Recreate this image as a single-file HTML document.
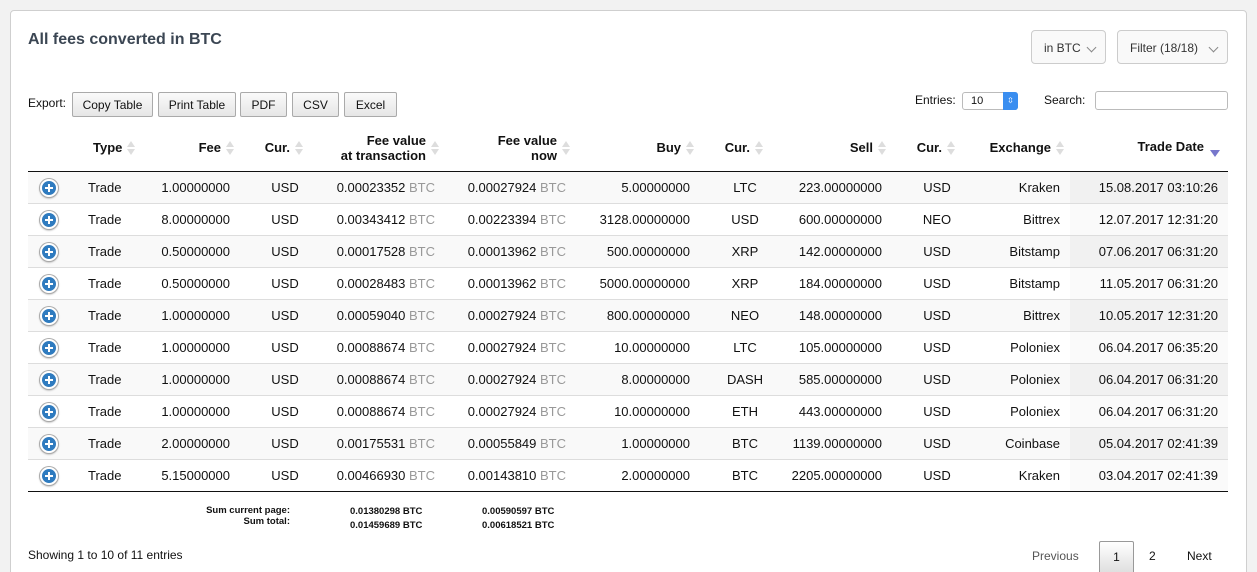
<!DOCTYPE html>
<html style="overflow:hidden;height:572px"><head><meta charset="utf-8"><style>
body{margin:0;background:#f2f2f2;font-family:"Liberation Sans",sans-serif;color:#111;width:1257px;height:572px;overflow:hidden;position:relative}
.card{position:absolute;left:10px;top:10px;width:1235px;height:570px;background:#fff;border:1px solid #cfcfcf;border-radius:4px}
.abs{position:absolute}
h1{position:absolute;left:28px;top:31px;margin:0;font-size:16px;font-weight:bold;color:#3b4653}
.dd{position:absolute;top:30px;height:34px;border:1px solid #ccc;border-radius:4px;background:#f9f9f9;font-size:12px;color:#333;line-height:34px;box-sizing:border-box;padding-left:12px}
.dd i{position:absolute;right:10px;top:13px;width:6px;height:6px;border-right:1.5px solid #888;border-bottom:1.5px solid #888;transform:rotate(45deg)}
.btn{position:absolute;top:92px;height:25px;border:1px solid #aaa;border-radius:2px;background:linear-gradient(#fafafa,#e6e6e6);font-size:12px;text-align:center;line-height:25px;box-sizing:border-box}
table{position:absolute;left:28px;top:125px;border-collapse:collapse;table-layout:fixed;width:1200px;font-size:13px}
th{height:46px;font-weight:bold;text-align:right;padding:0 6px 0 0;border-bottom:1px solid #111;line-height:15px;vertical-align:middle;white-space:nowrap}
td{height:31px;padding:0 10px 0 0;text-align:right;border-top:1px solid #ddd;white-space:nowrap}
tbody tr:first-child td{border-top:none;height:31px}
tbody tr:nth-child(odd) td{background:#f9f9f9}
tbody tr:nth-child(odd) td.s{background:#f1f1f1}
tbody tr:nth-child(even) td.s{background:#fafafa}
tbody tr:last-child td{border-bottom:1px solid #111}
td.c{text-align:center;padding:0}
td.t{text-align:left;padding-left:18px}
td.i{text-align:center;padding:0}
.g{color:#999}
.ar{display:inline-block;width:8px;margin-left:5px;vertical-align:middle;position:relative;height:16px}
.ar:before{content:"";position:absolute;left:0;top:1px;border:4px solid transparent;border-bottom:6px solid #ddd;border-top:0}
.ar:after{content:"";position:absolute;left:0;top:9px;border:4px solid transparent;border-top:6px solid #ddd;border-bottom:0}
.dn{display:inline-block;margin-left:6px;vertical-align:-6px;border:5px solid transparent;border-top:7px solid #7777cc;border-bottom:0}
.ic{display:inline-block;width:14px;height:14px;border-radius:50%;background:#2f7bbf;border:2px solid #fff;box-shadow:0 0 0 1px #aaa,0 1px 2px #888;position:relative;vertical-align:middle}
.ic:before{content:"";position:absolute;left:3px;top:6px;width:8px;height:2px;background:#fff}
.ic:after{content:"";position:absolute;left:6px;top:3px;width:2px;height:8px;background:#fff}
.sum{position:absolute;font-size:9.5px;font-weight:bold}
</style></head><body>
<div class="card"></div>
<h1>All fees converted in BTC</h1>
<div class="dd" style="left:1031px;width:75px">in BTC<i></i></div>
<div class="dd" style="left:1117px;width:111px">Filter (18/18)<i></i></div>
<div class="abs" style="left:28px;top:96px;font-size:12px">Export:</div>
<div class="btn" style="left:72px;width:81px">Copy Table</div>
<div class="btn" style="left:158px;width:78px">Print Table</div>
<div class="btn" style="left:240px;width:47px">PDF</div>
<div class="btn" style="left:292px;width:47px">CSV</div>
<div class="btn" style="left:344px;width:53px">Excel</div>
<div class="abs" style="left:915px;top:93px;font-size:12px">Entries:</div>
<div class="abs" style="left:962px;top:92px;width:56px;height:18px;border:1px solid #bbb;border-radius:3px;box-sizing:border-box;font-size:11px;line-height:16px;padding-left:8px">10<div class="abs" style="right:-1px;top:-1px;width:15px;height:18px;background:#3a8ef0;border-radius:0 3px 3px 0;color:#fff;font-size:8px;text-align:center;line-height:18px">&#8691;</div></div>
<div class="abs" style="left:1044px;top:93px;font-size:12px">Search:</div>
<div class="abs" style="left:1095px;top:91px;width:133px;height:19px;border:1px solid #bbb;border-radius:3px;box-sizing:border-box"></div>
<table>
<colgroup><col style="width:42px"><col style="width:70px"><col style="width:100px"><col style="width:90px"><col style="width:115px"><col style="width:131px"><col style="width:124px"><col style="width:90px"><col style="width:102px"><col style="width:90px"><col style="width:88px"><col style="width:158px"></colgroup>
<thead><tr><th></th><th style="text-align:left;padding-left:23px;padding-right:0">Type<span class="ar"></span></th><th>Fee<span class="ar"></span></th><th style="padding-right:27px">Cur.<span class="ar"></span></th><th><span style="display:inline-block;vertical-align:middle">Fee value<br>at transaction</span><span class="ar"></span></th><th><span style="display:inline-block;vertical-align:middle">Fee value<br>now</span><span class="ar"></span></th><th>Buy<span class="ar"></span></th><th style="padding-right:27px">Cur.<span class="ar"></span></th><th>Sell<span class="ar"></span></th><th style="padding-right:27px">Cur.<span class="ar"></span></th><th>Exchange<span class="ar"></span></th><th style="padding-right:8px">Trade Date<span class="dn"></span></th></tr></thead>
<tbody>
<tr><td class="i"><span class="ic"></span></td><td class="t">Trade</td><td>1.00000000</td><td class="c">USD</td><td>0.00023352 <span class="g">BTC</span></td><td>0.00027924 <span class="g">BTC</span></td><td>5.00000000</td><td class="c">LTC</td><td>223.00000000</td><td class="c">USD</td><td>Kraken</td><td class="s">15.08.2017 03:10:26</td></tr>
<tr><td class="i"><span class="ic"></span></td><td class="t">Trade</td><td>8.00000000</td><td class="c">USD</td><td>0.00343412 <span class="g">BTC</span></td><td>0.00223394 <span class="g">BTC</span></td><td>3128.00000000</td><td class="c">USD</td><td>600.00000000</td><td class="c">NEO</td><td>Bittrex</td><td class="s">12.07.2017 12:31:20</td></tr>
<tr><td class="i"><span class="ic"></span></td><td class="t">Trade</td><td>0.50000000</td><td class="c">USD</td><td>0.00017528 <span class="g">BTC</span></td><td>0.00013962 <span class="g">BTC</span></td><td>500.00000000</td><td class="c">XRP</td><td>142.00000000</td><td class="c">USD</td><td>Bitstamp</td><td class="s">07.06.2017 06:31:20</td></tr>
<tr><td class="i"><span class="ic"></span></td><td class="t">Trade</td><td>0.50000000</td><td class="c">USD</td><td>0.00028483 <span class="g">BTC</span></td><td>0.00013962 <span class="g">BTC</span></td><td>5000.00000000</td><td class="c">XRP</td><td>184.00000000</td><td class="c">USD</td><td>Bitstamp</td><td class="s">11.05.2017 06:31:20</td></tr>
<tr><td class="i"><span class="ic"></span></td><td class="t">Trade</td><td>1.00000000</td><td class="c">USD</td><td>0.00059040 <span class="g">BTC</span></td><td>0.00027924 <span class="g">BTC</span></td><td>800.00000000</td><td class="c">NEO</td><td>148.00000000</td><td class="c">USD</td><td>Bittrex</td><td class="s">10.05.2017 12:31:20</td></tr>
<tr><td class="i"><span class="ic"></span></td><td class="t">Trade</td><td>1.00000000</td><td class="c">USD</td><td>0.00088674 <span class="g">BTC</span></td><td>0.00027924 <span class="g">BTC</span></td><td>10.00000000</td><td class="c">LTC</td><td>105.00000000</td><td class="c">USD</td><td>Poloniex</td><td class="s">06.04.2017 06:35:20</td></tr>
<tr><td class="i"><span class="ic"></span></td><td class="t">Trade</td><td>1.00000000</td><td class="c">USD</td><td>0.00088674 <span class="g">BTC</span></td><td>0.00027924 <span class="g">BTC</span></td><td>8.00000000</td><td class="c">DASH</td><td>585.00000000</td><td class="c">USD</td><td>Poloniex</td><td class="s">06.04.2017 06:31:20</td></tr>
<tr><td class="i"><span class="ic"></span></td><td class="t">Trade</td><td>1.00000000</td><td class="c">USD</td><td>0.00088674 <span class="g">BTC</span></td><td>0.00027924 <span class="g">BTC</span></td><td>10.00000000</td><td class="c">ETH</td><td>443.00000000</td><td class="c">USD</td><td>Poloniex</td><td class="s">06.04.2017 06:31:20</td></tr>
<tr><td class="i"><span class="ic"></span></td><td class="t">Trade</td><td>2.00000000</td><td class="c">USD</td><td>0.00175531 <span class="g">BTC</span></td><td>0.00055849 <span class="g">BTC</span></td><td>1.00000000</td><td class="c">BTC</td><td>1139.00000000</td><td class="c">USD</td><td>Coinbase</td><td class="s">05.04.2017 02:41:39</td></tr>
<tr><td class="i"><span class="ic"></span></td><td class="t">Trade</td><td>5.15000000</td><td class="c">USD</td><td>0.00466930 <span class="g">BTC</span></td><td>0.00143810 <span class="g">BTC</span></td><td>2.00000000</td><td class="c">BTC</td><td>2205.00000000</td><td class="c">USD</td><td>Kraken</td><td class="s">03.04.2017 02:41:39</td></tr>
</tbody></table>
<div class="sum" style="left:150px;width:140px;text-align:right;top:505px;line-height:11px">Sum current page:<br>Sum total:</div>
<div class="sum" style="left:350px;top:505px;line-height:14px">0.01380298 BTC<br>0.01459689 BTC</div>
<div class="sum" style="left:482px;top:505px;line-height:14px">0.00590597 BTC<br>0.00618521 BTC</div>
<div class="abs" style="left:28px;top:548px;font-size:12px">Showing 1 to 10 of 11 entries</div>
<div class="abs" style="left:1032px;top:549px;font-size:12px;color:#555">Previous</div>
<div class="abs" style="left:1099px;top:541px;width:35px;height:34px;border:1px solid #999;border-radius:2px;background:linear-gradient(#fff,#ddd);box-sizing:border-box;font-size:12px;text-align:center;line-height:30px">1</div>
<div class="abs" style="left:1149px;top:549px;font-size:12px">2</div>
<div class="abs" style="left:1187px;top:549px;font-size:12px">Next</div>
</body></html>
